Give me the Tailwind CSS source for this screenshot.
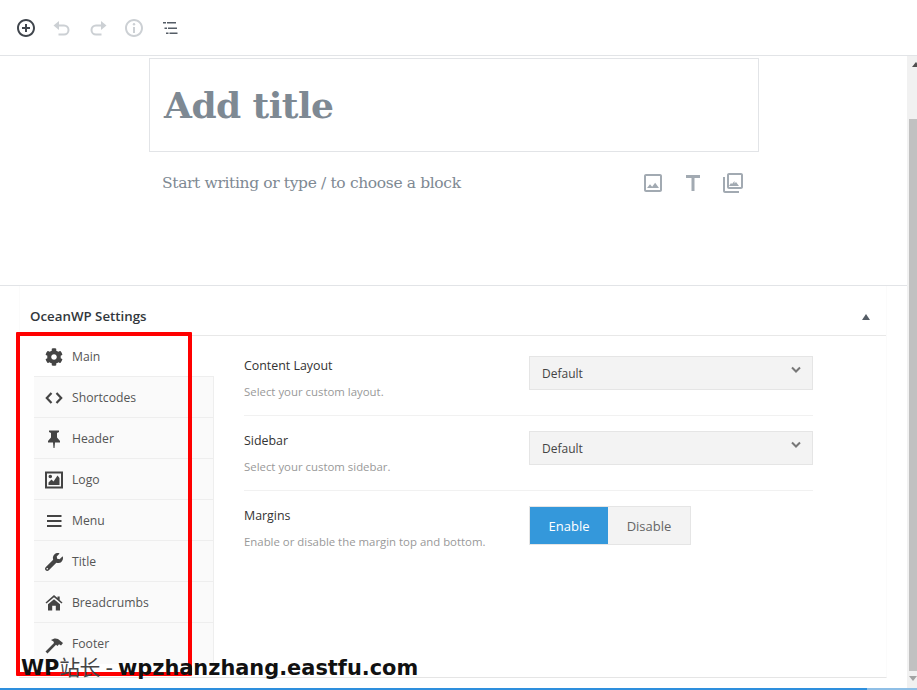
<!DOCTYPE html>
<html lang="en">
  <head>
    <meta charset="UTF-8" />
    <meta name="viewport" content="width=device-width, initial-scale=1.0" />
    <title>Add title</title>
    <script src="https://cdn.jsdelivr.net/npm/@tailwindcss/browser@4"></script>
  </head>
  <body class="bg-white">
    <div class="relative flex flex-col w-[917px] h-[690px] overflow-hidden font-['Open_Sans',sans-serif]">
      <!-- top toolbar -->
      <div class="flex items-center gap-[12px] h-[56px] shrink-0 pl-[14px] border-b border-[#e2e4e7]">
        <svg class="w-6 h-6 text-[#40464d]" viewBox="0 0 24 24" fill="currentColor"><path d="M12 3c-5 0-9 4-9 9s4 9 9 9 9-4 9-9-4-9-9-9zm0 16c-3.9 0-7-3.1-7-7s3.1-7 7-7 7 3.1 7 7-3.1 7-7 7zm1-11h-2v3H8v2h3v3h2v-3h3v-2h-3V8z" /></svg>
        <svg class="w-6 h-6 text-[#ccd0d4]" viewBox="0 0 24 24" fill="none" stroke="currentColor" stroke-width="2"><path d="M8 9.500h6a4.500 4.500 0 0 1 0 9H8.500" /><path d="M9 5v9L3.500 9.500z" fill="currentColor" stroke="none" /></svg>
        <svg class="w-6 h-6 text-[#ccd0d4]" viewBox="0 0 24 24" fill="none" stroke="currentColor" stroke-width="2"><path d="M16 9.500h-6a4.500 4.500 0 0 0 0 9h5.500" /><path d="M15 5v9l5.500-4.500z" fill="currentColor" stroke="none" /></svg>
        <svg class="w-6 h-6 text-[#ccd0d4]" viewBox="0 0 24 24" fill="currentColor"><path d="M12 3c-5 0-9 4-9 9s4 9 9 9 9-4 9-9-4-9-9-9zm0 16c-3.900 0-7-3.100-7-7s3.100-7 7-7 7 3.100 7 7-3.100 7-7 7z" /><path d="M11 11h2v6h-2z" /><circle cx="12" cy="8.200" r="1.200" /></svg>
        <svg class="w-6 h-6 text-[#555d66]" viewBox="0 0 24 24" fill="currentColor"><path d="M5 6h3v1.500H5zM9 6h9v1.500H9zM6.500 11.500h2.500V13H6.500zM10 11.500h9V13h-9zM8 16.500h2.500V18H8zM11.500 16.500h8V18h-8z" /></svg>
      </div>

      <div class="flex flex-1 min-h-0">
        <!-- editor column -->
        <div class="flex-1 min-w-0 flex flex-col">
          <div class="h-[230px] shrink-0 pt-[2px] pl-[149px] border-b border-[#e2e4e7]">
            <div class="w-[610px] h-[94px] flex items-center pl-[14px] border border-[#e2e4e7]">
              <span class="text-[36px] font-bold text-[#7e8993] tracking-[-0.55px] font-['DejaVu_Serif',serif]">Add title</span>
            </div>
            <div class="w-[610px] flex items-center justify-between mt-[19px] pl-[13px] pr-[14px] h-6">
              <span class="pt-[2px] text-[15.5px] text-[#7e8993] tracking-[-0.36px] font-['DejaVu_Serif',serif]">Start writing or type / to choose a block</span>
              <div class="flex gap-4 text-[#a2aab2]">
                <svg class="w-6 h-6" viewBox="0 0 24 24" fill="currentColor"><path d="M19 5v14H5V5h14m0-2H5c-1.100 0-2 .9-2 2v14c0 1.100.9 2 2 2h14c1.100 0 2-.9 2-2V5c0-1.100-.9-2-2-2zm-4.860 8.860l-3 3.870L9 13.140 6 17h12l-3.860-5.140z" /></svg>
                <svg class="w-6 h-6" viewBox="0 0 24 24" fill="currentColor"><path d="M5 4h14v3h-5.500v13h-3V7H5z" /></svg>
                <svg class="w-6 h-6" viewBox="0 0 24 24" fill="currentColor"><path d="M20 4v12H8V4h12m0-2H8c-1.100 0-2 .9-2 2v12c0 1.100.9 2 2 2h12c1.100 0 2-.9 2-2V4c0-1.100-.9-2-2-2zm-6.500 8l-2.500 3-1-1-2 3h10l-3-4-1.500 1.500z" /><path d="M2 6v14c0 1.100.9 2 2 2h14v-2H4V6H2z" /></svg>
              </div>
            </div>
          </div>

          <!-- settings metabox -->
          <div class="flex-1 min-h-0 pl-[19px] pr-[20px]">
            <div class="flex flex-col h-[392px] border-x border-x-[#fbfbfb] border-b border-b-[#e5e5e5]">
              <div class="flex items-center justify-between h-[50px] shrink-0 pl-[10px] pr-[15px] pt-[12px] border-b border-[#e8e8e8]">
                <span class="text-[13.3px] font-semibold text-[#32373c]">OceanWP Settings</span>
                <svg class="w-[10px] h-[10px] text-[#555d66]" viewBox="0 0 10 10" fill="currentColor"><path d="M5 2l4 6H1z" /></svg>
              </div>
              <div class="flex flex-1 min-h-0">
                <!-- tabs -->
                <div class="ml-[14px] w-[180px] shrink-0 text-[12.2px] text-[#555]">
                  <div class="flex items-center h-[41px] pl-[11px] pt-[2px] gap-[9px] border-b border-[#eee]">
                    <svg class="w-[18px] h-[18px] text-[#444]" viewBox="0 0 512 512" fill="currentColor"><path d="M487.400 315.700l-42.600-24.600c4.300-23.200 4.300-47 0-70.200l42.600-24.600c4.900-2.800 7.100-8.600 5.500-14-11.100-35.600-30-67.800-54.700-94.600-3.800-4.100-10-5.100-14.800-2.300L380.800 110c-17.900-15.400-38.500-27.300-60.800-35.100V25.800c0-5.600-3.900-10.500-9.400-11.700-36.700-8.200-74.300-7.800-109.200 0-5.500 1.200-9.400 6.100-9.400 11.700V75c-22.200 7.900-42.800 19.800-60.800 35.100L88.700 85.500c-4.900-2.800-11-1.900-14.800 2.300-24.700 26.700-43.600 58.900-54.700 94.600-1.700 5.400.6 11.200 5.500 14L67.300 221c-4.300 23.200-4.300 47 0 70.200l-42.600 24.600c-4.900 2.800-7.100 8.600-5.500 14 11.100 35.600 30 67.800 54.700 94.600 3.800 4.100 10 5.100 14.800 2.300l42.600-24.600c17.900 15.400 38.500 27.300 60.800 35.100v49.200c0 5.600 3.900 10.500 9.400 11.700 36.700 8.200 74.300 7.800 109.200 0 5.500-1.200 9.400-6.100 9.400-11.700v-49.200c22.200-7.900 42.800-19.800 60.800-35.100l42.600 24.600c4.900 2.800 11 1.900 14.800-2.300 24.700-26.700 43.600-58.900 54.700-94.600 1.500-5.500-.7-11.300-5.600-14.100zM256 336c-44.100 0-80-35.900-80-80s35.900-80 80-80 80 35.900 80 80-35.900 80-80 80z" /></svg>
                    <span>Main</span>
                  </div>
                  <div class="flex items-center h-[41px] pl-[11px] pt-[2px] gap-[9px] bg-[#fafafa] border-b border-r border-[#eee]">
                    <svg class="w-[18px] h-[18px] text-[#444]" viewBox="0 0 18 18" fill="none" stroke="currentColor" stroke-width="2.200"><path d="M6.500 4L1.800 9l4.700 5M11.500 4l4.700 5-4.700 5" /></svg>
                    <span>Shortcodes</span>
                  </div>
                  <div class="flex items-center h-[41px] pl-[11px] pt-[2px] gap-[9px] bg-[#fafafa] border-b border-r border-[#eee]">
                    <svg class="w-[18px] h-[18px] text-[#444]" viewBox="0 0 18 18" fill="currentColor"><path d="M4 .500h10V2l-2 1v4.500l3 3.500v1.500h-5l-.5 5.500h-1L8 12.500H3V11l3-3.500V3L4 2z" /></svg>
                    <span>Header</span>
                  </div>
                  <div class="flex items-center h-[41px] pl-[11px] pt-[2px] gap-[9px] bg-[#fafafa] border-b border-r border-[#eee]">
                    <svg class="w-[18px] h-[18px] text-[#444]" viewBox="0 0 18 18" fill="currentColor"><path fill-rule="evenodd" d="M0 .500h18v17H0zM2 2.500v13h14v-13zM3.500 14v-2.500l3-3 2 2 4-6 2 2.500v7zM3.500 5.500a1.800 1.800 0 1 1 3.600 0 1.800 1.800 0 0 1-3.600 0z" /></svg>
                    <span>Logo</span>
                  </div>
                  <div class="flex items-center h-[41px] pl-[11px] pt-[2px] gap-[9px] bg-[#fafafa] border-b border-r border-[#eee]">
                    <svg class="w-[18px] h-[18px] text-[#444]" viewBox="0 0 18 18" fill="currentColor"><path d="M2 3h14.500v2H2zM2 8h14.500v2H2zM2 13h14.500v2H2z" /></svg>
                    <span>Menu</span>
                  </div>
                  <div class="flex items-center h-[41px] pl-[11px] pt-[2px] gap-[9px] bg-[#fafafa] border-b border-r border-[#eee]">
                    <svg class="w-[18px] h-[18px] text-[#444]" viewBox="0 0 512 512" fill="currentColor"><path d="M507.730 109.100c-2.240-9.030-13.540-12.090-20.120-5.510l-74.360 74.360-67.880-11.310-11.310-67.880 74.360-74.360c6.620-6.620 3.430-17.900-5.660-20.160-47.380-11.740-99.550.91-136.580 37.930-39.640 39.640-50.550 97.100-34.050 147.200L18.740 402.760c-24.990 24.990-24.990 65.510 0 90.500 24.990 24.990 65.510 24.990 90.500 0l213.210-213.210c50.120 16.710 107.470 5.680 147.370-34.220 37.070-37.070 49.700-89.320 37.910-136.730zM64 472c-13.250 0-24-10.750-24-24 0-13.260 10.750-24 24-24s24 10.740 24 24c0 13.250-10.750 24-24 24z" /></svg>
                    <span>Title</span>
                  </div>
                  <div class="flex items-center h-[41px] pl-[11px] pt-[2px] gap-[9px] bg-[#fafafa] border-b border-r border-[#eee]">
                    <svg class="w-[18px] h-[18px] text-[#444]" viewBox="0 0 18 18" fill="currentColor"><path d="M9 1l3.500 3V2.500h2.200v3.500L17.500 8.500l-1 1.100L9 3.300 1.500 9.600l-1-1.100zM3 10.300L9 5.300l6 5V16.500h-4.200v-4.800H7.200v4.800H3z" /></svg>
                    <span>Breadcrumbs</span>
                  </div>
                  <div class="flex items-center h-[41px] pl-[11px] pt-[2px] gap-[9px] bg-[#fafafa] border-r border-[#eee]">
                    <svg class="w-[18px] h-[18px] text-[#444]" viewBox="0 0 18 18" fill="currentColor"><path d="M6 4c2.500-1.800 5-2 7-1l5 4-2 2.500-2-1.300-1.500 1.800-1.500-1.300L2.500 17.500 .5 15.500 9 7l-.5-1.500z" /></svg>
                    <span>Footer</span>
                  </div>
                </div>

                <!-- settings fields -->
                <div class="w-[569px] ml-[30px] text-[12.4px]">
                  <div class="flex justify-between h-[80px] pt-[20px] border-b border-[#f1f1f1]">
                    <div>
                      <p class="text-[#333] leading-[20px]">Content Layout</p>
                      <p class="text-[11.4px] text-[#999] mt-[6px] leading-[20px]">Select your custom layout.</p>
                    </div>
                    <div class="flex justify-between w-[284px] h-[34px] pl-[12px] pr-[11px] pt-[8px] bg-[#f3f3f3] border border-[#e5e5e5] text-[12px] text-[#444]">
                      <span class="leading-[18px]">Default</span>
                      <svg class="w-[10px] h-[10px] text-[#777]" viewBox="0 0 10 10" fill="none" stroke="currentColor" stroke-width="2"><path d="M1 2.500l4 4 4-4" /></svg>
                    </div>
                  </div>
                  <div class="flex justify-between h-[75px] pt-[15px] border-b border-[#f1f1f1]">
                    <div>
                      <p class="text-[#333] leading-[20px]">Sidebar</p>
                      <p class="text-[11.4px] text-[#999] mt-[6px] leading-[20px]">Select your custom sidebar.</p>
                    </div>
                    <div class="flex justify-between w-[284px] h-[34px] pl-[12px] pr-[11px] pt-[8px] bg-[#f3f3f3] border border-[#e5e5e5] text-[12px] text-[#444]">
                      <span class="leading-[18px]">Default</span>
                      <svg class="w-[10px] h-[10px] text-[#777]" viewBox="0 0 10 10" fill="none" stroke="currentColor" stroke-width="2"><path d="M1 2.500l4 4 4-4" /></svg>
                    </div>
                  </div>
                  <div class="flex justify-between pt-[15px]">
                    <div>
                      <p class="text-[#333] leading-[20px]">Margins</p>
                      <p class="text-[11.4px] text-[#999] mt-[6px] leading-[20px]">Enable or disable the margin top and bottom.</p>
                    </div>
                    <div class="flex w-[284px]">
                      <div class="flex h-[39px] border border-[#e5e5e5] text-[13px]">
                        <div class="flex items-center justify-center w-[78px] pt-[2px] bg-[#3498db] text-white">Enable</div>
                        <div class="flex items-center justify-center w-[82px] pt-[2px] bg-[#f3f3f3] text-[#666]">Disable</div>
                      </div>
                    </div>
                  </div>
                </div>
              </div>
            </div>
          </div>
        </div>

        <!-- scrollbar -->
        <div class="relative flex flex-col items-end w-[10px] shrink-0 bg-[#f1f1f1]">
          <div class="h-[63px] w-[8px] pt-[6px]">
            <div class="w-0 h-0 ml-[3px] border-x-[4px] border-x-transparent border-b-[5px] border-b-[#505050]"></div>
          </div>
          <div class="w-[8px] h-[552px] bg-[#c1c1c1]"></div>
          <div class="w-0 h-0 mt-[5px] border-x-[4px] border-x-transparent border-t-[5px] border-t-[#a3a3a3]"></div>
        </div>
      </div>

      <!-- bottom edge -->
      <div class="flex h-[2px] shrink-0">
        <div class="w-[867px] bg-[#2e8fdd]"></div>
        <div class="flex-1 bg-[#8fbfe6]"></div>
      </div>

      <!-- annotation over the screenshot -->
      <div class="absolute left-[16px] top-[332px] w-[176px] h-[344px] rounded-[1px] border-[4px] border-[#ff0000]"></div>
      <div class="absolute left-[21px] top-[656px] text-[20.9px] leading-[24px] font-bold text-[#111] whitespace-nowrap font-['DejaVu_Sans','Noto_Sans_CJK_SC',sans-serif]">WP<span class="font-normal text-[#444] tracking-[-0.8px]">站长 - </span>wpzhanzhang.eastfu.com</div>
    </div>
  </body>
</html>
